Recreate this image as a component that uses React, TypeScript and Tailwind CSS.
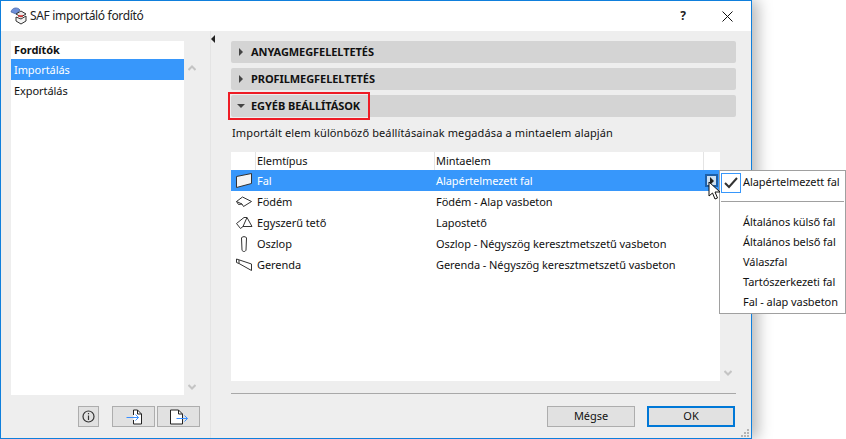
const font = { fontFamily: '"Noto Sans","Open Sans",sans-serif' };

function Wall() {
  return (
    <svg width="18" height="16" viewBox="0 0 18 16" fill="#f4f4f4" stroke="#333" strokeWidth="1">
      <path d="M1.5 3.5 L16.5 0.5 L16.5 10.5 L1.5 14.5 Z" />
    </svg>
  );
}
function Slab() {
  return (
    <svg width="18" height="16" viewBox="0 0 18 16" fill="none" stroke="#333" strokeWidth="1">
      <path d="M1.5 7.5 L7.5 3 L16.5 7.5 L8.5 12.5 L7 10 L3.5 10.5 Z M1.5 7.5 L7 10" />
    </svg>
  );
}
function Roof() {
  return (
    <svg width="18" height="16" viewBox="0 0 18 16" fill="none" stroke="#333" strokeWidth="1">
      <path d="M1.5 8.5 L9 2.5 L12 2.5 L17 11.5 L8 11.5 L5.5 13.5 Z M12 2.5 L8 11.5" />
    </svg>
  );
}
function Column() {
  return (
    <svg width="18" height="16" viewBox="0 0 18 16" fill="none" stroke="#333" strokeWidth="1">
      <path d="M6.5 2 C6.5 0.2 11.5 0.2 11.5 2 L11 14 C10.5 16 7.5 16 7 14 Z" />
    </svg>
  );
}
function Beam() {
  return (
    <svg width="18" height="16" viewBox="0 0 18 16" fill="none" stroke="#333" strokeWidth="1">
      <path d="M1.5 2 L16.5 7 L16.5 13.5 L4 6.5 L1.5 5.5 Z M4 6.5 L4 3" />
    </svg>
  );
}

const rows = [
  { icon: <Wall />, a: "Fal", b: "Alapértelmezett fal", sel: true },
  { icon: <Slab />, a: "Födém", b: "Födém - Alap vasbeton" },
  { icon: <Roof />, a: "Egyszerű tető", b: "Lapostető" },
  { icon: <Column />, a: "Oszlop", b: "Oszlop - Négyszög keresztmetszetű vasbeton" },
  { icon: <Beam />, a: "Gerenda", b: "Gerenda - Négyszög keresztmetszetű vasbeton" },
];

function Section({ open, label, mark }: { open?: boolean; label: string; mark?: boolean }) {
  return (
    <div className="relative h-[22px] bg-[#d4d4d4] rounded-[2px] flex items-center text-[11px] font-bold text-[#111]">
      <span className="w-[20px] flex justify-center">
        {open ? (
          <span className="w-0 h-0 border-x-[4px] border-x-transparent border-t-[4px] border-t-[#444]" />
        ) : (
          <span className="w-0 h-0 border-y-[4px] border-y-transparent border-l-[4px] border-l-[#444]" />
        )}
      </span>
      {label}
      {mark && <span className="absolute left-[-3px] top-[-3px] w-[142px] h-[28px] border-2 border-[#ee1c25]" />}
    </div>
  );
}

function Chevron({ down }: { down?: boolean }) {
  return (
    <svg width="8" height="6" viewBox="0 0 8 6" fill="none" stroke="#c4c4c4" strokeWidth="2">
      <path d={down ? "M0.5 1 L4 4.5 L7.5 1" : "M0.5 5 L4 1.5 L7.5 5"} />
    </svg>
  );
}

export default function App() {
  return (
    <div className="relative w-[846px] h-[439px] bg-white overflow-hidden text-[11px] text-[#111] tracking-[-0.07px]" style={font}>
      <div className="relative w-[752px] h-[439px] border border-[#0f7fdc] flex flex-col bg-[#eeeeee] shadow-[6px_0_14px_rgba(0,0,0,0.28)]">
        {/* Title */}
        <div className="h-[30px] bg-white flex items-center shrink-0">
          <svg className="ml-[9px]" width="20" height="20" viewBox="0 0 20 20">
            <path d="M1 6 C2 1 8 1 10 4 L6 8 Z" fill="#6f8fd8" stroke="#3b5fa8" strokeWidth="0.7" />
            <path d="M6 8 L11 5 L16 8 L11 11 Z" fill="#e9e9e9" stroke="#333" strokeWidth="1" />
            <path d="M6 11 L11 13 L16 10 L16 15 L11 18 L6 15 Z" fill="#f4f4f4" stroke="#333" strokeWidth="1" />
            <path d="M8 10 L13 10" stroke="#d33" strokeWidth="1.5" />
          </svg>
          <span className="text-[12px] text-[#222] tracking-[-0.32px]">SAF importáló fordító</span>
          <span className="ml-auto mr-[36px] text-[12px] font-bold text-[#222]">?</span>
          <svg className="mr-[18px]" width="11" height="11" viewBox="0 0 11 11" stroke="#111" strokeWidth="1" fill="none">
            <path d="M0.5 0.5 L10.5 10.5 M10.5 0.5 L0.5 10.5" />
          </svg>
        </div>
        {/* Body */}
        <div className="flex-1 flex min-h-0">
          {/* left */}
          <div className="w-[210px] shrink-0 flex flex-col pl-[10px] pt-[10px] border-r border-[#e4e4e4]">
            <div className="flex h-[354px]">
              <div className="w-[173px] bg-white flex flex-col">
                <div className="h-[18px] flex items-center pl-[3px] pt-[1px] font-bold">Fordítók</div>
                <div className="h-[21px] flex items-center pl-[3px] pt-[1px] bg-[#3797fb] text-white">Importálás</div>
                <div className="h-[21px] flex items-center pl-[3px] pt-[1px]">Exportálás</div>
              </div>
              <div className="w-[16px] flex flex-col items-center justify-between pt-[24px] pb-[5px]">
                <Chevron />
                <Chevron down />
              </div>
            </div>
            <div className="flex mt-[11px] ml-[67px]">
              <button className="w-[21px] h-[21px] border border-[#adadad] bg-[#e1e1e1] flex items-center justify-center">
                <svg width="13" height="13" viewBox="0 0 13 13" fill="none" stroke="#333" strokeWidth="1.2">
                  <circle cx="6.5" cy="6.5" r="5.5" />
                  <path d="M6.5 5.5 V10 M6.5 3 V4.2" />
                </svg>
              </button>
              <button className="ml-[13px] w-[43px] h-[21px] border border-[#adadad] bg-[#e1e1e1] flex items-center justify-center">
                <svg width="20" height="16" viewBox="0 0 20 16" fill="none">
                  <path d="M9.5 6 V1 H13.5 L17.5 5 V15 H9.5 V11" fill="#fff" stroke="#222" />
                  <path d="M13.5 1 V5 H17.5" stroke="#222" />
                  <path d="M2.5 8.5 H14.5 M11.5 5.5 L14.5 8.5 L11.5 11.5" stroke="#3a8fff" />
                </svg>
              </button>
              <button className="ml-[2px] w-[43px] h-[21px] border border-[#adadad] bg-[#e1e1e1] flex items-center justify-center">
                <svg width="20" height="16" viewBox="0 0 20 16" fill="none">
                  <path d="M1.5 1 H9.5 L13.5 5 V15 H1.5 Z" fill="#fff" stroke="#222" />
                  <path d="M9.5 1 V5 H13.5" stroke="#222" />
                  <path d="M7.5 9.5 H18.5 M15.5 6.5 L18.5 9.5 L15.5 12.5" stroke="#3a8fff" />
                </svg>
              </button>
            </div>
          </div>
          {/* Splitter */}
          <div className="relative w-[20px] shrink-0">
            <span className="absolute left-0 top-[4px] w-0 h-0 border-y-[4px] border-y-transparent border-r-[4px] border-r-[#222]" />
          </div>
          {/* right */}
          <div className="flex-1 flex flex-col pt-[10px] pr-[15px] min-w-0">
            <div className="flex flex-col gap-[5px]">
              <Section label="ANYAGMEGFELELTETÉS" />
              <Section label="PROFILMEGFELELTETÉS" />
              <Section open label="EGYÉB BEÁLLÍTÁSOK" mark />
            </div>
            <div className="h-[15px] mt-[9px] pl-[1px] flex items-center tracking-[0.12px]">Importált elem különböző beállításainak megadása a mintaelem alapján</div>
            <div className="mt-[11px] h-[229px] flex">
              <div className="w-[489px] bg-white flex flex-col">
                <div className="flex h-[18px] shrink-0 items-center">
                  <div className="w-[25px] h-full border-r border-[#e4e4e4]" />
                  <div className="w-[179px] h-full pl-[1px] flex items-center border-r border-[#e4e4e4]">Elemtípus</div>
                  <div className="w-[269px] h-full pl-[1px] flex items-center border-r border-[#e4e4e4]">Mintaelem</div>
                </div>
                {rows.map((r) => (
                  <div key={r.a} className={"flex h-[21px] items-center shrink-0 " + (r.sel ? "bg-[#3797fb] text-white" : "")}>
                    <div className="w-[25px] pl-[4px] flex">{r.icon}</div>
                    <div className="w-[179px] pl-[1px] pt-[1px]">{r.a}</div>
                    <div className="w-[269px] pl-[1px] pt-[1px] whitespace-nowrap">{r.b}</div>
                    {r.sel && (
                      <div className="ml-[1px] w-[13px] h-[13px] bg-[#cfe0f0] border-2 border-[#1d5fa8] flex items-center justify-center">
                        <span className="w-0 h-0 border-y-[4px] border-y-transparent border-l-[4px] border-l-[#222]" />
                      </div>
                    )}
                  </div>
                ))}
              </div>
              <div className="w-[16px] flex flex-col items-center justify-end pb-[5px]">
                <Chevron down />
              </div>
            </div>
            <div className="h-px bg-[#a8a8a8] mt-[12px]" />
            <div className="flex justify-end mt-[12px] mr-[1px] gap-[12px]">
              <button className="w-[88px] h-[21px] border border-[#adadad] bg-[#e1e1e1] text-[11px]">Mégse</button>
              <button className="w-[88px] h-[21px] border-2 border-[#0078d7] bg-[#e1e1e1] text-[11px]">OK</button>
            </div>
          </div>
        </div>
        {/* Resize grip */}
        <svg className="absolute right-[2px] bottom-[1px]" width="8" height="8" viewBox="0 0 8 8" fill="#b4b4b4">
          <rect x="6" y="0" width="2" height="2" />
          <rect x="3" y="3" width="2" height="2" />
          <rect x="6" y="3" width="2" height="2" />
          <rect x="0" y="6" width="2" height="2" />
          <rect x="3" y="6" width="2" height="2" />
          <rect x="6" y="6" width="2" height="2" />
        </svg>
      </div>
      {/* Menu */}
      <div className="absolute left-[719px] top-[170px] w-[127px] h-[144px] bg-white border border-[#a0a0a0] text-[#111]">
        <div className="flex items-center h-[21px] mt-[1px]">
          <div className="ml-[1px] w-[20px] h-[20px] border border-[#3797fb] flex items-center justify-center">
            <svg width="14" height="12" viewBox="0 0 14 12" fill="none" stroke="#333" strokeWidth="2"><path d="M1 6 L5 10 L13 1" /></svg>
          </div>
          <span className="ml-[2px]">Alapértelmezett fal</span>
        </div>
        <div className="h-px bg-[#a0a0a0] mt-[8px] mx-[1px]" />
        <div className="mt-[10px] flex flex-col pl-[23px]">
          {["Általános külső fal", "Általános belső fal", "Válaszfal", "Tartószerkezeti fal", "Fal - alap vasbeton"].map((t) => (
            <div key={t} className="h-[20px] flex items-center whitespace-nowrap">{t}</div>
          ))}
        </div>
      </div>
      {/* Cursor */}
      <svg className="absolute left-[708px] top-[181px]" width="14" height="20" viewBox="0 0 14 20">
        <path d="M1 1 V15 L4.5 12 L7 18 L9.5 17 L7 11 L12 11 Z" fill="#fff" stroke="#111" strokeWidth="1" />
      </svg>
    </div>
  );
}
